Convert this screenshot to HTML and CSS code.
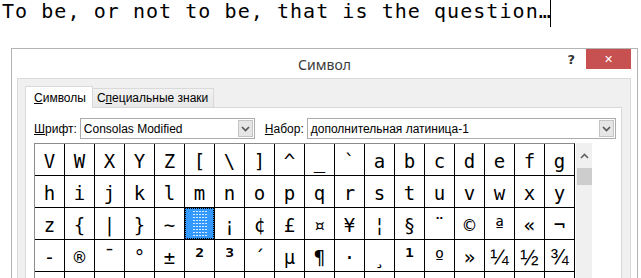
FILE: index.html
```html
<!DOCTYPE html>
<html lang="ru">
<head>
    <meta charset="UTF-8">
    <title>Символ</title>
    <link rel="stylesheet" href="styles.css">
</head>
<body>
    <div class="doc">
        <span class="doc-text">To be, or not to be, that is the question…</span><span class="caret"></span>
    </div>

    <div class="dialog">
        <div class="titlebar">
            <div class="title">Символ</div>
            <div class="controls">
                <span class="help">?</span>
                <span class="close">&#x2715;</span>
            </div>
        </div>

        <div class="panel">
            <div class="tabs">
                <div class="tab active"><u>С</u>имволы</div>
                <div class="tab">С<u>п</u>ециальные знаки</div>
            </div>
            <div class="page">
                <div class="pickers">
                    <label class="lbl"><u>Ш</u>рифт:</label>
                    <div class="combo combo-font">
                        <span class="combo-text">Consolas Modified</span>
                        <span class="combo-btn"><svg width="9" height="6" viewBox="0 0 9 6"><polyline points="1,1 4.5,4.5 8,1" fill="none" stroke="#555" stroke-width="1.6"/></svg></span>
                    </div>
                    <label class="lbl lbl-set"><u>Н</u>абор:</label>
                    <div class="combo combo-set">
                        <span class="combo-text">дополнительная латиница-1</span>
                        <span class="combo-btn"><svg width="9" height="6" viewBox="0 0 9 6"><polyline points="1,1 4.5,4.5 8,1" fill="none" stroke="#555" stroke-width="1.6"/></svg></span>
                    </div>
                </div>

                <div class="chars">
                    <div class="grid" id="grid"></div>
                    <div class="scrollbar">
                        <span class="sb-up"><svg width="9" height="6" viewBox="0 0 9 6"><polyline points="1,5 4.5,1.5 8,5" fill="none" stroke="#606060" stroke-width="1.6"/></svg></span>
                        <span class="sb-thumb"></span>
                    </div>
                </div>
            </div>
        </div>
    </div>

    <script>
// символы таблицы, по строкам; \u0000 — выделенная ячейка
const rows = [
    'VWXYZ[\\]^_`abcdefg',
    'hijklmnopqrstuvwxy',
    'z{|}~\u0000¡¢£¤¥¦§¨©ª«¬',
    '-®¯°±²³´µ¶·¸¹º»¼½¾',
    '¿ÀÁÂÃÄÅÆÇÈÉÊËÌÍÎÏÐ'
];
// эти знаки в Consolas крупнее и жирнее
const heavy = '¹²³';
const fractions = '¼½¾';
const grid = document.getElementById('grid');
rows.forEach(row => {
    for (const ch of row) {
        const cell = document.createElement('div');
        cell.className = 'cell';
        if (ch === '\u0000') {
            cell.classList.add('selected');
            const box = document.createElement('span');
            box.className = 'missing';
            cell.appendChild(box);
        } else {
            cell.textContent = ch;
            if (heavy.includes(ch)) cell.classList.add('heavy');
            if (fractions.includes(ch)) cell.classList.add('frac');
        }
        grid.appendChild(cell);
    }
});
    </script>
</body>
</html>
```

FILE: styles.css
```css
body {
    margin: 0;
    background-color: #fff;
    font-family: "Liberation Sans", Arial, sans-serif;
    font-size: 12px;
    color: #000;
    height: 278px;
    overflow: hidden;
}
.doc {
    height: 48px;
    padding-left: 2px;
    font-family: "DejaVu Sans Mono", monospace;
    font-size: 20px;
    line-height: 27px;
    white-space: nowrap;
}
.doc-text {
    letter-spacing: 1.05px;
    vertical-align: top;
    position: relative;
    top: -2px;
}
.caret {
    display: inline-block;
    width: 1px;
    height: 27px;
    background-color: #000;
    vertical-align: top;
    margin-left: -2px;
}
.dialog {
    margin-left: 11px;
    width: 625px;
    border: 1px solid #b4b4b4;
    border-bottom: none;
    background-color: #fff;
    height: 240px;
}
.titlebar {
    display: grid;
    grid-template-columns: 1fr auto 1fr;
    height: 29px;
}
.title {
    grid-column: 2;
    align-self: center;
    font-family: "Noto Sans", sans-serif;
    font-size: 14px;
    color: #3a3a3a;
    padding-top: 1px;
}
.controls {
    grid-column: 3;
    justify-self: end;
    display: flex;
    align-items: flex-start;
    margin-right: 6px;
}
.help {
    font-family: "DejaVu Sans", sans-serif;
    font-weight: bold;
    font-size: 13px;
    color: #333;
    margin-top: 3px;
    margin-right: 11px;
}
.close {
    width: 45px;
    height: 20px;
    background-color: #c75050;
    color: #fff;
    font-size: 11px;
    font-family: "DejaVu Sans", sans-serif;
    font-weight: bold;
    display: flex;
    align-items: center;
    justify-content: center;
}
.panel {
    margin: 0 6px 0 5px;
    border: 1px solid #d9d9d9;
    border-bottom: none;
    background-color: #f0f0f0;
    padding: 7px 8px 0 7px;
    height: 220px;
}
.tabs {
    display: flex;
    align-items: flex-end;
    height: 21px;
}
.tab {
    height: 18px;
    line-height: 18px;
    padding: 0 5px 0 4px;
    border: 1px solid #d9d9d9;
    border-bottom: none;
    background: linear-gradient(#f2f2f2, #e8e8e8);
    margin-left: -1px;
}
.tab.active {
    height: 21px;
    line-height: 22px;
    margin-left: 0;
    background: #fff;
    position: relative;
    z-index: 1;
    margin-bottom: -1px;
    padding: 0 6px 0 8px;
}
.page {
    border: 1px solid #d9d9d9;
    border-bottom: none;
    background-color: #fff;
    padding: 10px 0 0 8px;
    height: 200px;
}
.pickers {
    display: flex;
    align-items: center;
    height: 21px;
}
.lbl {
    margin-right: 3px;
}
.lbl-set {
    margin-left: 10px;
}
.combo {
    display: flex;
    align-items: center;
    height: 19px;
    border: 1px solid #acacac;
    background-color: #fff;
}
.combo-font {
    width: 173px;
}
.combo-set {
    width: 307px;
}
.combo-text {
    flex: 1;
    padding-left: 3px;
    white-space: nowrap;
}
.combo-btn {
    width: 15px;
    height: 17px;
    margin-right: 1px;
    border: 1px solid #c4c4c4;
    box-sizing: border-box;
    background-color: #e6e6e6;
    display: flex;
    align-items: center;
    justify-content: center;
}
.chars {
    display: flex;
    align-items: flex-start;
    margin-top: 4px;
}
.grid {
    display: grid;
    grid-template-columns: repeat(18, 29px);
    grid-auto-rows: 31px;
    gap: 1px;
    background-color: #000;
    border-top: 1px solid #8c8c8c;
    border-left: 1px solid #8c8c8c;
    border-right: 1px solid #000;
}
.cell {
    background-color: #fff;
    font-family: "DejaVu Sans Mono", monospace;
    font-size: 19px;
    line-height: 31px;
    text-align: center;
    padding-top: 2px;
    box-sizing: border-box;
}
.cell.heavy {
    font-weight: bold;
    font-size: 21px;
}
.cell.frac {
    font-family: "Liberation Sans", sans-serif;
    font-size: 22px;
}
.cell.selected {
    background-color: #3399ff;
    outline: 1px dotted #000;
    outline-offset: -1px;
    display: flex;
    justify-content: center;
    align-items: flex-end;
    padding: 0 0 2px 0;
}
.missing {
    width: 14px;
    height: 26px;
    background:
        repeating-linear-gradient(90deg, transparent 0 2px, #3399ff 2px 3px),
        repeating-linear-gradient(180deg, #d8ebff 0 1px, transparent 1px 3px);
}
.scrollbar {
    width: 16px;
    height: 140px;
    margin-left: 1px;
    background-color: #f0f0f0;
    display: flex;
    flex-direction: column;
    align-items: center;
}
.sb-up {
    height: 25px;
    display: flex;
    align-items: center;
}
.sb-thumb {
    width: 15px;
    height: 17px;
    background-color: #cdcdcd;
}
```
